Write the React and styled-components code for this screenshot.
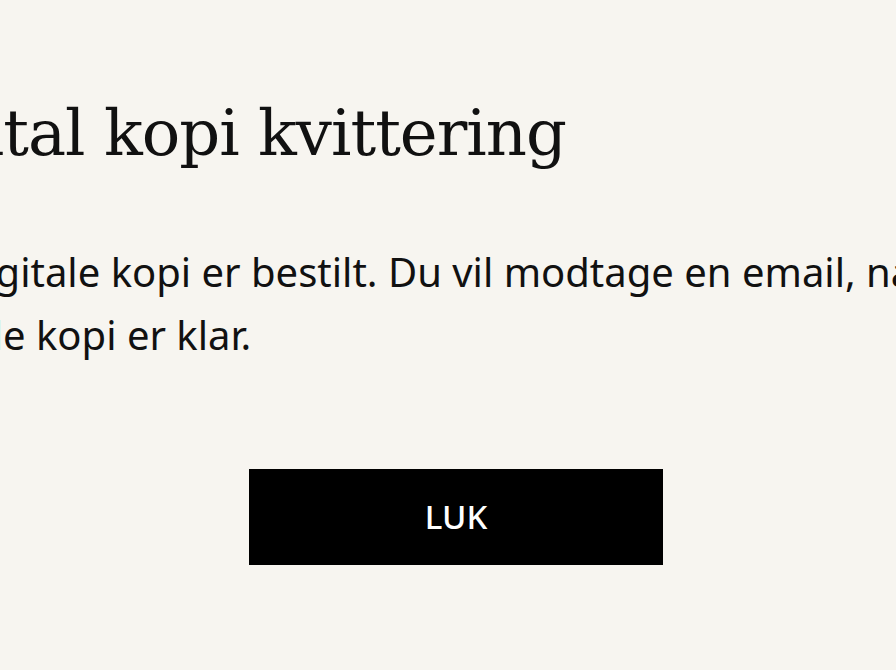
import React from "react";
import styled, { createGlobalStyle } from "styled-components";

const GlobalStyle = createGlobalStyle`
  html, body {
    margin: 0;
    padding: 0;
    background: #f7f5f0;
    overflow: hidden;
  }
  body {
    width: 896px;
    height: 670px;
  }
`;

const Dialog = styled.div`
  width: 1140px;
  margin-left: -114px;
  padding-top: 95px;
  display: flex;
  flex-direction: column;
  color: #111;
`;

const Title = styled.h1`
  margin: 0 0 0 -12px;
  font-family: "DejaVu Serif", "Liberation Serif", serif;
  font-weight: 400;
  font-size: 64px;
  line-height: 1.2;
  letter-spacing: -1px;
  white-space: nowrap;
`;

const Message = styled.p`
  margin: 68px 0 0;
  font-family: "Noto Sans", "Open Sans", sans-serif;
  font-size: 40px;
  line-height: 63px;
`;

const Actions = styled.div`
  display: flex;
  justify-content: center;
  margin-top: 103px;
`;

const CloseButton = styled.button`
  width: 414px;
  height: 96px;
  border: none;
  background: #000;
  color: #fff;
  font-family: "Noto Sans", "Open Sans", sans-serif;
  font-size: 33px;
  font-weight: 500;
  cursor: pointer;
`;

export default function App() {
  return (
    <>
      <GlobalStyle />
      <Dialog>
        <Title>Digital kopi kvittering</Title>
        <Message>
          Din digitale kopi er bestilt. Du vil modtage en email, når din
          digitale kopi er klar.
        </Message>
        <Actions>
          <CloseButton>LUK</CloseButton>
        </Actions>
      </Dialog>
    </>
  );
}
